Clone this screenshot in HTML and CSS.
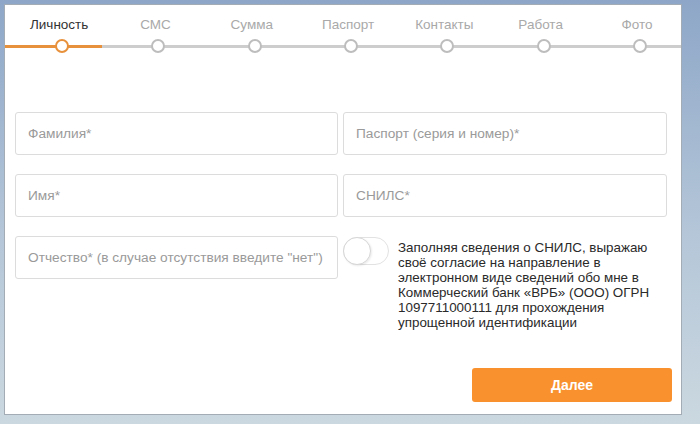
FILE: index.html
```html
<!DOCTYPE html>
<html lang="ru">
<head>
<meta charset="utf-8">
<link rel="stylesheet" href="styles.css">
</head>
<body>
<div class="panel">
  <div class="steps">
    <div class="labels">
      <span class="label active">Личность</span>
      <span class="label">СМС</span>
      <span class="label">Сумма</span>
      <span class="label">Паспорт</span>
      <span class="label">Контакты</span>
      <span class="label">Работа</span>
      <span class="label">Фото</span>
    </div>
    <div class="track">
      <span class="dot-cell"><span class="dot active"></span></span>
      <span class="dot-cell"><span class="dot"></span></span>
      <span class="dot-cell"><span class="dot"></span></span>
      <span class="dot-cell"><span class="dot"></span></span>
      <span class="dot-cell"><span class="dot"></span></span>
      <span class="dot-cell"><span class="dot"></span></span>
      <span class="dot-cell"><span class="dot"></span></span>
    </div>
  </div>
  <form class="form">
    <input class="field" type="text" placeholder="Фамилия*">
    <input class="field" type="text" placeholder="Паспорт (серия и номер)*">
    <input class="field" type="text" placeholder="Имя*">
    <input class="field" type="text" placeholder="СНИЛС*">
    <input class="field" type="text" placeholder="Отчество* (в случае отсутствия введите &quot;нет&quot;)">
    <div class="consent">
      <span class="toggle"><span class="knob"></span></span>
      <p class="consent-text">Заполняя сведения о СНИЛС, выражаю своё согласие на направление в электронном виде сведений обо мне в Коммерческий банк «ВРБ» (ООО) ОГРН 1097711000111 для прохождения упрощенной идентификации</p>
    </div>
  </form>
  <div class="actions">
    <button class="next" type="button">Далее</button>
  </div>
</div>
</body>
</html>
```

FILE: styles.css
```css
html, body {
  margin: 0;
  padding: 0;
}
body {
  width: 700px;
  height: 424px;
  overflow: hidden;
  background: linear-gradient(to bottom, #8ea7c8 0%, #b4c6d8 55%, #cbd8e0 100%);
  font-family: "Liberation Sans", Arial, sans-serif;
}
.panel {
  box-sizing: border-box;
  margin: 4px 0 0 4px;
  width: 678px;
  height: 411px;
  background: #fff;
  border: 1px solid #a3abb5;
  overflow: hidden;
}
.steps {
  padding-top: 12px;
}
.labels, .track {
  display: grid;
  grid-template-columns: repeat(7, 96.3px);
  padding-left: 9px;
}
.label {
  text-align: center;
  font-size: 13.5px;
  line-height: 16px;
  color: #a9a9a9;
  padding-right: 6px;
}
.label.active {
  color: #333;
}
.track {
  margin-top: 6px;
  height: 14px;
  width: 676px;
  box-sizing: border-box;
  background: linear-gradient(to right, #e8913c 0, #e8913c 97px, #cdcdcd 97px, #cdcdcd 100%) no-repeat center / 100% 3px;
}
.dot-cell {
  display: flex;
  justify-content: center;
}
.dot {
  box-sizing: border-box;
  width: 14px;
  height: 14px;
  border-radius: 50%;
  background: #fff;
  border: 2px solid #bdbdbd;
}
.dot.active {
  border-color: #e8913c;
}
.form {
  display: grid;
  grid-template-columns: 323px 324px;
  column-gap: 5px;
  row-gap: 19px;
  margin: 59px 0 0 10px;
}
.field {
  box-sizing: border-box;
  height: 43px;
  margin: 0;
  padding: 0 12px;
  border: 1px solid #dcdcdc;
  border-radius: 3px;
  font-family: "Liberation Sans", Arial, sans-serif;
  font-size: 13.7px;
  color: #333;
  background: #fff;
  outline: none;
}
.field::placeholder {
  color: #9a9a9a;
  opacity: 1;
}
.consent {
  display: flex;
  align-items: flex-start;
  gap: 9px;
}
.toggle {
  flex: none;
  box-sizing: border-box;
  width: 46px;
  height: 28px;
  margin-top: 1px;
  border: 1px solid #e2e2e2;
  border-radius: 14px;
  background: #fff;
  display: flex;
  align-items: center;
}
.knob {
  box-sizing: border-box;
  width: 28px;
  height: 28px;
  margin-left: -1px;
  border-radius: 50%;
  border: 1px solid #d6d6d6;
  background: #fff;
  box-shadow: 1px 1px 2px rgba(0, 0, 0, 0.08);
}
.consent-text {
  margin: 4px 0 0;
  width: 270px;
  font-size: 13.4px;
  line-height: 15px;
  color: #2a2a2a;
}
.actions {
  display: flex;
  justify-content: flex-end;
  padding-right: 9px;
  margin-top: 38px;
}
.next {
  width: 200px;
  height: 34px;
  border: none;
  border-radius: 3px;
  background: #f9912f;
  color: #fff;
  font-family: "Liberation Sans", Arial, sans-serif;
  font-size: 14px;
  font-weight: bold;
  cursor: pointer;
}
```
